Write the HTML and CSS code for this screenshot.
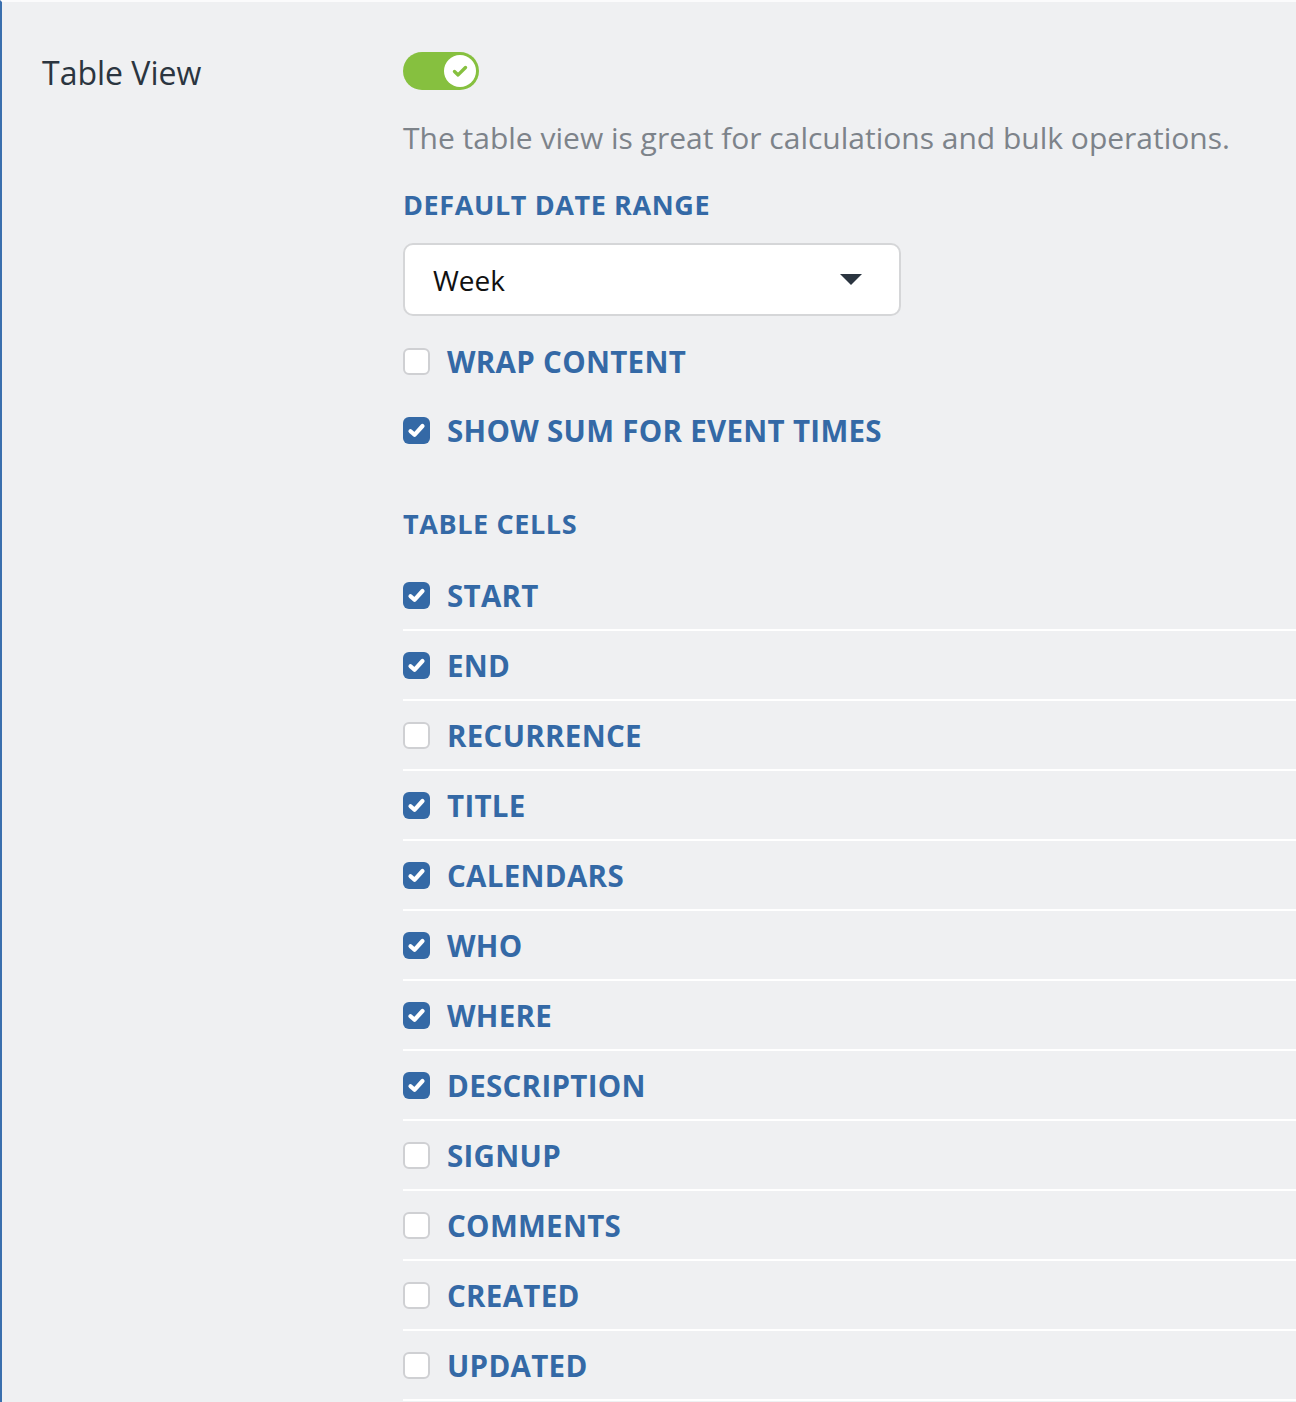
FILE: index.html
```html
<!DOCTYPE html>
<html lang="en">
<head>
  <meta charset="UTF-8">
  <title>Table View Settings</title>
  <link rel="stylesheet" href="styles.css">
</head>
<body>
  <div class="panel">
    <div class="setting-name">Table View</div>

    <div class="setting-body">
      <label class="toggle">
        <span class="knob">
          <svg width="22" height="22" viewBox="0 0 22 22"><path d="M5.5 11.5l3.6 3.4L16.5 7.5" fill="none" stroke="#86c03f" stroke-width="3.4" stroke-linecap="round" stroke-linejoin="round"/></svg>
        </span>
      </label>

      <p class="hint">The table view is great for calculations and bulk operations.</p>

      <h4 class="section-title">Default Date Range</h4>
      <div class="select">
        <span>Week</span>
        <span class="caret"></span>
      </div>

      <div class="options">
        <div class="check-row">
          <span class="box"></span>
          <span class="check-label">Wrap Content</span>
        </div>
        <div class="check-row">
          <span class="box checked"></span>
          <span class="check-label">Show Sum for Event Times</span>
        </div>
      </div>

      <h4 class="section-title cells-title">Table Cells</h4>
      <div class="cells" id="cells"></div>
    </div>
  </div>

  <script>
    const cells = [
      ["Start", true], ["End", true], ["Recurrence", false], ["Title", true],
      ["Calendars", true], ["Who", true], ["Where", true], ["Description", true],
      ["Signup", false], ["Comments", false], ["Created", false], ["Updated", false]
    ];

    const list = document.getElementById("cells");
    cells.forEach(([name, on]) => {
      const row = document.createElement("div");
      row.className = "cell-row";
      row.innerHTML = `<span class="box${on ? " checked" : ""}"></span>
        <span class="check-label">${name}</span>`;
      list.appendChild(row);
    });
  </script>
</body>
</html>
```

FILE: styles.css
```css
body {
  margin: 0;
  font-family: 'Open Sans', sans-serif;
  background: #eff0f2;
}

.panel {
  display: flex;
  min-height: 1400px;
  border-top: 2px solid #fbfbfc;
  border-left: 2px solid #3a6fae;
  padding: 0 0 0 40px;
}

.setting-name {
  width: 361px;
  flex-shrink: 0;
  padding-top: 49px;
  font-size: 32px;
  color: #2b3540;
}

.setting-body {
  flex: 1;
  padding-top: 50px;
}

.toggle {
  display: flex;
  justify-content: flex-end;
  align-items: center;
  width: 76px;
  height: 38px;
  box-sizing: border-box;
  padding: 3px;
  border-radius: 19px;
  background: #86c03f;
}

.knob {
  display: flex;
  align-items: center;
  justify-content: center;
  width: 32px;
  height: 32px;
  border-radius: 50%;
  background: #fff;
}

.hint {
  margin: 27px 0 0;
  font-size: 30px;
  color: #7d838a;
}

.section-title {
  margin: 28px 0 0;
  font-size: 27px;
  font-weight: 700;
  color: #3469a6;
  text-transform: uppercase;
  letter-spacing: 0.6px;
}

.select {
  display: flex;
  align-items: center;
  justify-content: space-between;
  width: 498px;
  height: 73px;
  box-sizing: border-box;
  margin-top: 20px;
  padding: 0 37px 0 28px;
  border: 2px solid #d5d6d8;
  border-radius: 10px;
  background: #fff;
  font-size: 28px;
  color: #111;
}

.caret {
  width: 0;
  height: 0;
  border-left: 11px solid transparent;
  border-right: 11px solid transparent;
  border-top: 11px solid #2b3540;
}

.options {
  margin-top: 25px;
  display: flex;
  flex-direction: column;
  gap: 28px;
}

.check-row, .cell-row {
  display: flex;
  align-items: center;
  gap: 17px;
}

.box {
  width: 27px;
  height: 27px;
  box-sizing: border-box;
  border: 2px solid #cfd0d3;
  border-radius: 6px;
  background: #fff;
  flex-shrink: 0;
}

.box.checked {
  border: none;
  background: #3469a6 url("data:image/svg+xml;utf8,<svg xmlns='http://www.w3.org/2000/svg' viewBox='0 0 27 27'><path d='M7.5 14.2l4 3.6L19.5 9' fill='none' stroke='white' stroke-width='4.2' stroke-linecap='round' stroke-linejoin='round'/></svg>") center / 27px 27px no-repeat;
}

.check-label {
  font-size: 29.5px;
  font-weight: 700;
  color: #3469a6;
  text-transform: uppercase;
  letter-spacing: 0.3px;
}

.cells-title {
  margin-top: 54px;
}

.cells {
  margin-top: 19px;
}

.cell-row {
  height: 68px;
  border-bottom: 2px solid #fff;
}
```
